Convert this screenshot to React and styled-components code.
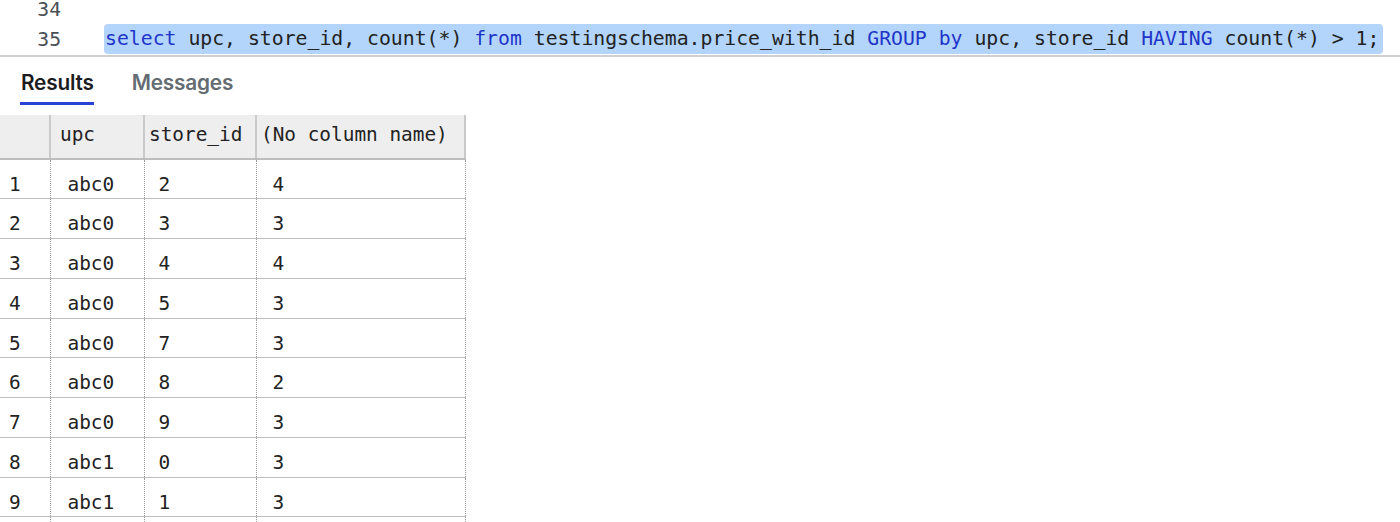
import React from "react";
import styled, { createGlobalStyle } from "styled-components";

const Global = createGlobalStyle`
  html, body { margin: 0; padding: 0; background: #fff; }
  body { font-family: "Inter", "Noto Sans", sans-serif; }
`;

const MONO = `"DejaVu Sans Mono", "Liberation Mono", monospace`;

const Page = styled.div`
  width: 1400px;
  height: 522px;
  overflow: hidden;
  background: #fff;
`;

const Editor = styled.div`
  height: 54px;
  border-bottom: 2px solid #cfcfcf;
  display: flex;
  flex-direction: column;
  justify-content: flex-end;
  padding-bottom: 1px;
  overflow: hidden;
`;

const Line = styled.div`
  display: flex;
  align-items: center;
  height: 30px;
  flex: none;
  font-family: ${MONO};
  font-size: 19.8px;
  white-space: pre;
`;

const LineNo = styled.span`
  width: 61px;
  text-align: right;
  color: #4a4f55;
  flex: none;
  font-size: 19.7px;
`;

const Code = styled.span`
  margin-left: 43px;
  padding: 0 4px 0 1px;
  height: 30px;
  line-height: 30px;
  border-radius: 4px;
  background: ${(p) => (p.$selected ? "#b3d5fb" : "transparent")};
  color: #222;
`;

const Kw = styled.span`
  color: #1f35c9;
`;

const Tabs = styled.div`
  display: flex;
  gap: 37px;
  padding: 13px 0 0 20px;
  box-sizing: border-box;
  height: 58px;
`;

const Tab = styled.div`
  font-size: 20.8px;
  font-weight: 600;
  letter-spacing: -0.2px;
  color: ${(p) => (p.$active ? "#1d1d1f" : "#646c73")};
  padding: 0 0 0 1px;
  height: 35px;
  box-sizing: border-box;
  border-bottom: 3px solid ${(p) => (p.$active ? "#2a43d6" : "transparent")};
`;

const Grid = styled.table`
  border-collapse: collapse;
  font-family: ${MONO};
  font-size: 19.4px;
  color: #222;
`;

const HeadCell = styled.th`
  height: 44px;
  padding: 0 0 4px ${(p) => p.$pad ?? 9}px;
  width: ${(p) => p.$w}px;
  box-sizing: border-box;
  text-align: left;
  font-weight: 400;
  background: #eeeeee;
  border-left: 2px solid #c9c9c9;
  border-bottom: 2px solid #bdbdbd;
  white-space: pre;
  &:first-child { border-left: none; }
  &:last-child { border-right: 2px solid #c9c9c9; }
`;

const Cell = styled.td`
  height: 39.75px;
  padding: 13px 0 0 ${(p) => p.$pad ?? 15}px;
  line-height: 24px;
  vertical-align: top;
  box-sizing: border-box;
  border-left: 1px dotted #9a9a9a;
  border-bottom: 1.5px solid #bdbdbd;
  white-space: pre;
  &:first-child { border-left: none; padding-left: 9px; }
  &:last-child { border-right: 1px dotted #9a9a9a; }
`;

const rows = [
  ["abc0", "2", "4"],
  ["abc0", "3", "3"],
  ["abc0", "4", "4"],
  ["abc0", "5", "3"],
  ["abc0", "7", "3"],
  ["abc0", "8", "2"],
  ["abc0", "9", "3"],
  ["abc1", "0", "3"],
  ["abc1", "1", "3"],
];

export default function App() {
  return (
    <Page>
      <Global />
      <Editor>
        <Line>
          <LineNo>34</LineNo>
        </Line>
        <Line>
          <LineNo>35</LineNo>
          <Code $selected>
            <Kw>select</Kw> upc, store_id, count(*) <Kw>from</Kw> testingschema.price_with_id{" "}
            <Kw>GROUP</Kw> <Kw>by</Kw> upc, store_id <Kw>HAVING</Kw> count(*) &gt; 1;
          </Code>
        </Line>
      </Editor>
      <Tabs>
        <Tab $active>Results</Tab>
        <Tab>Messages</Tab>
      </Tabs>
      <Grid>
        <thead>
          <tr>
            <HeadCell $w={50} />
            <HeadCell $w={94} $pad={9}>upc</HeadCell>
            <HeadCell $w={112} $pad={4}>store_id</HeadCell>
            <HeadCell $w={209} $pad={4}>(No column name)</HeadCell>
          </tr>
        </thead>
        <tbody>
          {rows.map((r, i) => (
            <tr key={i}>
              <Cell>{i + 1}</Cell>
              <Cell $pad={17}>{r[0]}</Cell>
              <Cell $pad={14}>{r[1]}</Cell>
              <Cell $pad={16}>{r[2]}</Cell>
            </tr>
          ))}
          <tr>
            <Cell />
            <Cell />
            <Cell />
            <Cell />
          </tr>
        </tbody>
      </Grid>
    </Page>
  );
}
